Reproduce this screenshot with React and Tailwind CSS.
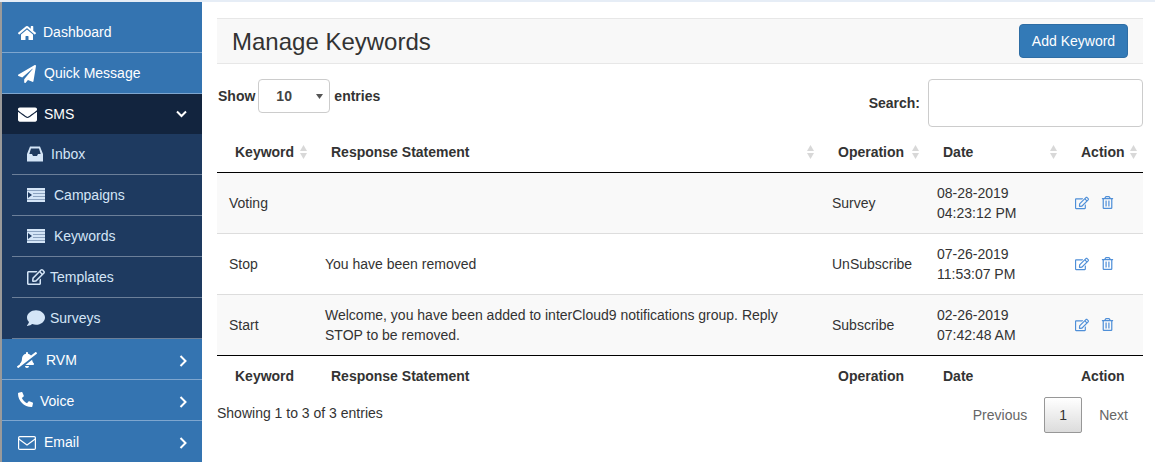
import React from "react";
import { FaHome, FaPaperPlane, FaEnvelope, FaRegEdit, FaComment, FaBellSlash, FaPhone, FaRegTrashAlt } from "react-icons/fa";

function ChevronRight() {
  return (
    <svg className="ml-auto mr-[1px] mt-[1px]" width="8" height="12" viewBox="0 0 8 12" fill="none" stroke="white" strokeWidth="2"><path d="M1.5 1 L6.5 6 L1.5 11" /></svg>
  );
}

function ChevronDown() {
  return (
    <svg className="ml-auto mr-[1px]" width="11" height="8" viewBox="0 0 11 8" fill="none" stroke="white" strokeWidth="2"><path d="M1 1.5 L5.5 6 L10 1.5" /></svg>
  );
}

function InboxIcon() {
  return (
    <svg width="16" height="16" viewBox="0 0 16 16" fill="currentColor">
      <path fillRule="evenodd" d="M3 0.5 H13 L16 8 V15.5 H0 V8 Z M4 2.5 L2.3 8 H5 L6 10 H10 L11 8 H13.7 L12 2.5 Z" />
    </svg>
  );
}

function IndentIcon() {
  return (
    <svg width="18" height="14" viewBox="0 0 18 14" fill="currentColor">
      <rect x="0" y="0" width="18" height="14" />
      <rect x="0" y="2" width="18" height="1" fill="#8ca3c0" />
      <rect x="6" y="5" width="12" height="1" fill="#8ca3c0" />
      <rect x="6" y="8" width="12" height="1" fill="#8ca3c0" />
      <rect x="0" y="11" width="18" height="1" fill="#8ca3c0" />
      <path d="M1 4 L5 7 L1 10 Z" fill="#1e3a60" />
    </svg>
  );
}

function MailOutline() {
  return (
    <svg width="18" height="14" viewBox="0 0 18 14" fill="none" stroke="white" strokeWidth="1.2">
      <rect x="0.6" y="0.6" width="16.8" height="12.8" rx="1.2" />
      <path d="M0.8 3 L9 9 L17.2 3" />
    </svg>
  );
}

function TopItem({ icon, label, gap, bg = "bg-[#3474b1]", chevron, border = true, shift = true }) {
  return (
    <div className={`h-[41px] flex items-center pl-[15px] pr-[14px] text-white text-[14px] ${bg} ${border ? "border-b border-[#7ea6cf]" : ""} ${shift ? "pt-[2px]" : ""}`}>
      <span className="w-[20px] flex justify-center shrink-0">{icon}</span>
      <span style={{ marginLeft: gap }}>{label}</span>
      {chevron === "right" && <ChevronRight />}
      {chevron === "down" && <ChevronDown />}
    </div>
  );
}

function SubItem({ icon, label, gap }) {
  return (
    <div className="ml-[10px] h-[41px] flex items-center pl-[15px] border-b border-[#6c7f99] text-[14px] text-[#d4e5f7]">
      <span className="w-[18px] flex shrink-0">{icon}</span>
      <span style={{ marginLeft: gap }}>{label}</span>
    </div>
  );
}

function Sort() {
  return (
    <svg className="absolute right-[5px] top-[25px] -translate-y-1/2" width="9" height="16" viewBox="0 0 9 16" fill="#d8d8d8">
      <path d="M4.5 1 L8 7 H1 Z" />
      <path d="M4.5 15 L8 9 H1 Z" />
    </svg>
  );
}

const rows = [
  { k: "Voting", r: "", o: "Survey", d1: "08-28-2019", d2: "04:23:12 PM", odd: true },
  { k: "Stop", r: "You have been removed", o: "UnSubscribe", d1: "07-26-2019", d2: "11:53:07 PM" },
  { k: "Start", r: "Welcome, you have been added to interCloud9 notifications group. Reply STOP to be removed.", o: "Subscribe", d1: "02-26-2019", d2: "07:42:48 AM", odd: true },
];

const heads = ["Keyword", "Response Statement", "Operation", "Date", "Action"];

export default function App() {
  return (
    <div className="w-[1155px] h-[462px] overflow-hidden bg-white flex flex-col text-[#333] font-['Liberation_Sans',Arial,sans-serif]">
      <div className="h-[2px] bg-[#e6edf6] shrink-0" />
      <div className="flex flex-1 min-h-0">
        <aside className="w-[202px] shrink-0 border-l-2 border-[#9a9a9a] flex flex-col">
          <div className="h-[10px] bg-[#3474b1]" />
          <TopItem icon={<FaHome className="text-[18px]" />} label="Dashboard" gap="6px" />
          <TopItem icon={<FaPaperPlane className="text-[18px]" />} label="Quick Message" gap="7px" />
          <TopItem icon={<FaEnvelope className="text-[19px]" />} label="SMS" gap="7px" bg="bg-[#12243e]" chevron="down" border={false} shift={false} />
          <div className="bg-[#1e3a60]">
            <SubItem icon={<InboxIcon />} label="Inbox" gap="6px" />
            <SubItem icon={<IndentIcon />} label="Campaigns" gap="9px" />
            <SubItem icon={<IndentIcon />} label="Keywords" gap="9px" />
            <SubItem icon={<FaRegEdit className="text-[18px]" />} label="Templates" gap="5px" />
            <SubItem icon={<FaComment className="text-[18px]" />} label="Surveys" gap="5px" />
          </div>
          <TopItem icon={<FaBellSlash className="text-[20px] scale-x-[-1]" />} label="RVM" gap="9px" chevron="right" />
          <TopItem icon={<FaPhone className="text-[15px] scale-x-[-1] -translate-x-[2px] -translate-y-[2px]" />} label="Voice" gap="3px" chevron="right" />
          <TopItem icon={<MailOutline />} label="Email" gap="7px" chevron="right" border={false} />
          <div className="flex-1 bg-[#3474b1]" />
        </aside>
        <main className="w-[926px] ml-[15px] pt-[16px]">
          <div className="h-[46px] bg-[#f8f8f8] border-y border-[#e7e7e7] flex items-center justify-between pl-[15px] pr-[15px]">
            <h1 className="text-[24px] leading-none font-normal pt-[2px]">Manage Keywords</h1>
            <button className="w-[109px] h-[34px] rounded-[4px] bg-[#337ab7] border border-[#2e6da4] text-white text-[14px]">Add Keyword</button>
          </div>
          <div className="flex justify-between mt-[15px]">
            <div className="flex items-start text-[14px] font-bold h-[48px] pl-[1px]">
              <span className="leading-[34px]">Show</span>
              <div className="relative w-[72px] h-[34px] ml-[3px] mr-[4px] border border-[#ccc] rounded-[4px] flex items-center pl-[17px] font-normal">
                <span className="font-bold text-[#444]">10</span>
                <svg className="absolute right-[6px] top-[14px]" width="7" height="5" viewBox="0 0 7 5" fill="#555"><path d="M0 0 H7 L3.5 5 Z" /></svg>
              </div>
              <span className="leading-[34px]">entries</span>
            </div>
            <div className="flex items-center text-[14px] font-bold">
              <span className="mr-[8px] mt-[1px]">Search:</span>
              <div className="w-[215px] h-[48px] border border-[#ccc] rounded-[4px]" />
            </div>
          </div>
          <table className="w-[926px] table-fixed border-collapse text-[14px]">
            <colgroup>
              <col className="w-[96px]" /><col className="w-[507px]" /><col className="w-[105px]" /><col className="w-[138px]" /><col className="w-[80px]" />
            </colgroup>
            <thead>
              <tr className="h-[45px] border-b border-black">
                {heads.map((h) => (
                  <th key={h} className="relative pl-[18px] text-left font-bold pt-[7px]">{h}<Sort /></th>
                ))}
              </tr>
            </thead>
            <tbody>
              {rows.map((r) => (
                <tr key={r.k} className={`h-[61px] border-b border-[#ddd] last:border-black leading-[20px] ${r.odd ? "bg-[#f9f9f9]" : ""}`}>
                  <td className="pl-[12px]">{r.k}</td>
                  <td className="pl-[12px] pr-[30px]">{r.r}</td>
                  <td className="pl-[12px]">{r.o}</td>
                  <td className="pl-[12px]">{r.d1}<br />{r.d2}</td>
                  <td className="pl-[12px]">
                    <span className="flex items-center gap-[12px] text-[#4f8fd8]">
                      <FaRegEdit className="text-[14px]" /><FaRegTrashAlt className="text-[13px]" />
                    </span>
                  </td>
                </tr>
              ))}
            </tbody>
            <tfoot>
              <tr className="h-[42px]">
                {heads.map((h) => (
                  <th key={h} className="pl-[18px] text-left font-bold">{h}</th>
                ))}
              </tr>
            </tfoot>
          </table>
          <div className="flex justify-between items-start">
            <div className="text-[14px] mt-[6px]">Showing 1 to 3 of 3 entries</div>
            <div className="flex items-center text-[14px] text-[#666] pr-[15px]">
              <span className="mr-[17px]">Previous</span>
              <span className="w-[38px] h-[36px] border border-[#979797] rounded-[2px] bg-gradient-to-b from-white to-[#dcdcdc] flex items-center justify-center text-[#333]">1</span>
              <span className="ml-[17px]">Next</span>
            </div>
          </div>
        </main>
      </div>
    </div>
  );
}
